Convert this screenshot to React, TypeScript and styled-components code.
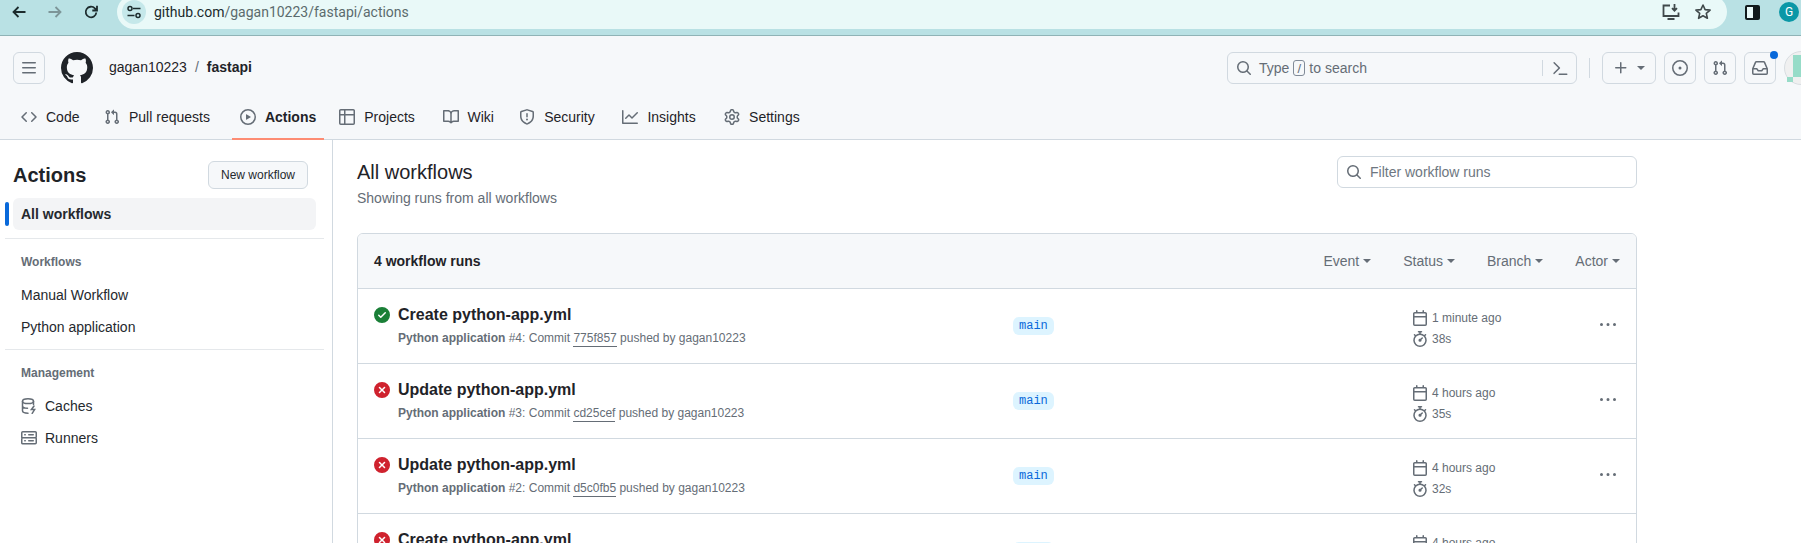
import React from "react";
import styled, { createGlobalStyle } from "styled-components";

const Global = createGlobalStyle`
  html, body { margin: 0; padding: 0; height: 100%; overflow: hidden; background: #fff; }
  body { font-family: "Liberation Sans", Arial, sans-serif; font-size: 14px; color: #1f2328; }
  * { box-sizing: border-box; }
`;

const P = {
  bars: "M1 2.75A.75.75 0 0 1 1.75 2h12.5a.75.75 0 0 1 0 1.5H1.75A.75.75 0 0 1 1 2.75Zm0 5A.75.75 0 0 1 1.75 7h12.5a.75.75 0 0 1 0 1.5H1.75A.75.75 0 0 1 1 7.75ZM1.75 12h12.5a.75.75 0 0 1 0 1.5H1.75a.75.75 0 0 1 0-1.5Z",
  github: "M8 0c4.42 0 8 3.58 8 8a8.013 8.013 0 0 1-5.45 7.59c-.4.08-.55-.17-.55-.38 0-.27.01-1.13.01-2.2 0-.75-.25-1.23-.54-1.48 1.78-.2 3.65-.88 3.65-3.95 0-.88-.31-1.59-.82-2.15.08-.2.36-1.02-.08-2.12 0 0-.67-.22-2.2.82-.64-.18-1.32-.27-2-.27-.68 0-1.36.09-2 .27-1.53-1.03-2.2-.82-2.2-.82-.44 1.1-.16 1.92-.08 2.12-.51.56-.82 1.28-.82 2.15 0 3.06 1.86 3.75 3.64 3.95-.23.2-.44.55-.51 1.07-.46.21-1.61.55-2.33-.66-.15-.24-.6-.83-1.23-.82-.67.01-.27.38.01.53.34.19.73.9.82 1.13.16.45.68 1.31 2.69.94 0 .67.01 1.3.01 1.49 0 .21-.15.45-.55.38A7.995 7.995 0 0 1 0 8c0-4.42 3.58-8 8-8Z",
  code: "m11.28 3.22 4.25 4.25a.75.75 0 0 1 0 1.06l-4.25 4.25a.749.749 0 0 1-1.275-.326.749.749 0 0 1 .215-.734L13.94 8l-3.72-3.72a.749.749 0 0 1 .326-1.275.749.749 0 0 1 .734.215Zm-6.56 0a.751.751 0 0 1 1.042.018.751.751 0 0 1 .018 1.042L2.06 8l3.72 3.72a.749.749 0 0 1-.326 1.275.749.749 0 0 1-.734-.215L.47 8.53a.75.75 0 0 1 0-1.06Z",
  pr: "M1.5 3.25a2.25 2.25 0 1 1 3 2.122v5.256a2.251 2.251 0 1 1-1.5 0V5.372A2.25 2.25 0 0 1 1.5 3.25Zm5.677-.177L9.573.677A.25.25 0 0 1 10 .854V2.5h1A2.5 2.5 0 0 1 13.5 5v5.628a2.251 2.251 0 1 1-1.5 0V5a1 1 0 0 0-1-1h-1v1.646a.25.25 0 0 1-.427.177L7.177 3.427a.25.25 0 0 1 0-.354ZM3.75 2.5a.75.75 0 1 0 0 1.5.75.75 0 0 0 0-1.5Zm0 9.5a.75.75 0 1 0 0 1.5.75.75 0 0 0 0-1.5Zm8.25.75a.75.75 0 1 0 1.5 0 .75.75 0 0 0-1.5 0Z",
  play: "M8 0a8 8 0 1 1 0 16A8 8 0 0 1 8 0ZM1.5 8a6.5 6.5 0 1 0 13 0 6.5 6.5 0 0 0-13 0Zm4.879-2.773 4.264 2.559a.25.25 0 0 1 0 .428l-4.264 2.559A.25.25 0 0 1 6 10.559V5.442a.25.25 0 0 1 .379-.215Z",
  table: "M0 1.75C0 .784.784 0 1.75 0h12.5C15.216 0 16 .784 16 1.75v12.5A1.75 1.75 0 0 1 14.25 16H1.75A1.75 1.75 0 0 1 0 14.25ZM6.5 6.5v8h7.75a.25.25 0 0 0 .25-.25V6.5Zm8-1.5V1.75a.25.25 0 0 0-.25-.25H6.5V5Zm-13 1.5v7.75c0 .138.112.25.25.25H5v-8ZM5 5V1.5H1.75a.25.25 0 0 0-.25.25V5Z",
  book: "M0 1.75A.75.75 0 0 1 .75 1h4.253c1.227 0 2.317.59 3 1.501A3.743 3.743 0 0 1 11.006 1h4.245a.75.75 0 0 1 .75.75v10.5a.75.75 0 0 1-.75.75h-4.507a2.25 2.25 0 0 0-1.591.659l-.622.621a.75.75 0 0 1-1.06 0l-.622-.621A2.25 2.25 0 0 0 5.258 13H.75a.75.75 0 0 1-.75-.75Zm7.251 10.324.004-5.073-.002-2.253A2.25 2.25 0 0 0 5.003 2.5H1.5v9h3.757a3.75 3.75 0 0 1 1.994.574ZM8.755 4.75l-.004 7.322a3.752 3.752 0 0 1 1.992-.572H14.5v-9h-3.495a2.25 2.25 0 0 0-2.25 2.25Z",
  shield: "M7.467.133a1.748 1.748 0 0 1 1.066 0l5.25 1.68A1.75 1.75 0 0 1 15 3.48V7c0 1.566-.32 3.182-1.303 4.682-.983 1.498-2.585 2.813-5.032 3.855a1.697 1.697 0 0 1-1.33 0c-2.447-1.042-4.049-2.357-5.032-3.855C1.32 10.182 1 8.566 1 7V3.48a1.75 1.75 0 0 1 1.217-1.667Zm.61 1.429a.25.25 0 0 0-.153 0l-5.25 1.68a.25.25 0 0 0-.174.238V7c0 1.358.275 2.666 1.057 3.86.784 1.194 2.121 2.34 4.366 3.297a.196.196 0 0 0 .154 0c2.245-.956 3.582-2.104 4.366-3.298C13.225 9.666 13.5 8.36 13.5 7V3.48a.251.251 0 0 0-.174-.237l-5.25-1.68ZM8.75 4.75v3a.75.75 0 0 1-1.5 0v-3a.75.75 0 0 1 1.5 0ZM9 10.5a1 1 0 1 1-2 0 1 1 0 0 1 2 0Z",
  graph: "M1.5 1.75V13.5h13.75a.75.75 0 0 1 0 1.5H.75a.75.75 0 0 1-.75-.75V1.75a.75.75 0 0 1 1.5 0Zm14.28 2.53-5.25 5.25a.75.75 0 0 1-1.06 0L7 7.06 4.28 9.78a.751.751 0 0 1-1.042-.018.751.751 0 0 1-.018-1.042l3.25-3.25a.75.75 0 0 1 1.06 0L10 7.94l4.72-4.72a.751.751 0 0 1 1.042.018.751.751 0 0 1 .018 1.042Z",
  gear: "M8 0a8.2 8.2 0 0 1 .701.031C9.444.095 9.99.645 10.16 1.29l.288 1.107c.018.066.079.158.212.224.231.114.454.243.668.386.123.082.233.09.299.071l1.103-.303c.644-.176 1.392.021 1.82.63.27.385.506.792.704 1.218.315.675.111 1.422-.364 1.891l-.814.806c-.049.048-.098.147-.088.294.016.257.016.515 0 .772-.01.147.038.246.088.294l.814.806c.475.469.679 1.216.364 1.891a7.977 7.977 0 0 1-.704 1.217c-.428.61-1.176.807-1.82.63l-1.102-.302c-.067-.019-.177-.011-.3.071a5.909 5.909 0 0 1-.668.386c-.133.066-.194.158-.211.224l-.29 1.106c-.168.646-.715 1.196-1.458 1.26a8.006 8.006 0 0 1-1.402 0c-.743-.064-1.289-.614-1.458-1.26l-.289-1.106c-.018-.066-.079-.158-.212-.224a5.738 5.738 0 0 1-.668-.386c-.123-.082-.233-.09-.299-.071l-1.103.303c-.644.176-1.392-.021-1.82-.63a8.12 8.12 0 0 1-.704-1.218c-.315-.675-.111-1.422.363-1.891l.815-.806c.05-.048.098-.147.088-.294a6.214 6.214 0 0 1 0-.772c.01-.147-.038-.246-.088-.294l-.815-.806C.635 6.045.431 5.298.746 4.623a7.92 7.92 0 0 1 .704-1.217c.428-.61 1.176-.807 1.82-.63l1.102.302c.067.019.177.011.3-.071.214-.143.437-.272.668-.386.133-.066.194-.158.211-.224l.29-1.106C6.009.645 6.556.095 7.299.03 7.53.01 7.764 0 8 0Zm-.571 1.525c-.036.003-.108.036-.137.146l-.289 1.105c-.147.561-.549.967-.998 1.189-.173.086-.34.183-.5.29-.417.278-.97.423-1.529.27l-1.103-.303c-.109-.03-.175.016-.195.045-.22.312-.412.644-.573.99-.014.031-.021.11.059.19l.815.806c.411.406.562.957.53 1.456a4.709 4.709 0 0 0 0 .582c.032.499-.119 1.05-.53 1.456l-.815.806c-.081.08-.073.159-.059.19.162.346.353.677.573.989.02.03.085.076.195.046l1.102-.303c.56-.153 1.113-.008 1.53.27.161.107.328.204.501.29.447.222.85.629.997 1.189l.289 1.105c.029.109.101.143.137.146a6.6 6.6 0 0 0 1.142 0c.036-.003.108-.036.137-.146l.289-1.105c.147-.561.549-.967.998-1.189.173-.086.34-.183.5-.29.417-.278.97-.423 1.529-.27l1.103.303c.109.029.175-.016.195-.045.22-.313.411-.644.573-.99.014-.031.021-.11-.059-.19l-.815-.806c-.411-.406-.562-.957-.53-1.456a4.709 4.709 0 0 0 0-.582c-.032-.499.119-1.05.53-1.456l.815-.806c.081-.08.073-.159.059-.19a6.464 6.464 0 0 0-.573-.989c-.02-.03-.085-.076-.195-.046l-1.102.303c-.56.153-1.113.008-1.53-.27a4.44 4.44 0 0 0-.501-.29c-.447-.222-.85-.629-.997-1.189l-.289-1.105c-.029-.11-.101-.143-.137-.146a6.6 6.6 0 0 0-1.142 0ZM11 8a3 3 0 1 1-6 0 3 3 0 0 1 6 0ZM9.5 8a1.5 1.5 0 1 0-3.001.001A1.5 1.5 0 0 0 9.5 8Z",
  search: "M10.68 11.74a6 6 0 0 1-7.922-8.982 6 6 0 0 1 8.982 7.922l3.04 3.04a.749.749 0 0 1-.326 1.275.749.749 0 0 1-.734-.215ZM11.5 7a4.499 4.499 0 1 0-8.997 0A4.499 4.499 0 0 0 11.5 7Z",
  palette: "m6.354 8.04-4.773 4.773a.75.75 0 1 0 1.061 1.06L7.945 8.57a.75.75 0 0 0 0-1.06L2.642 2.206a.75.75 0 0 0-1.06 1.061L6.353 8.04ZM7.25 13.5h7.5a.75.75 0 0 1 0 1.5h-7.5a.75.75 0 0 1 0-1.5Z",
  plus: "M7.75 2a.75.75 0 0 1 .75.75V7h4.25a.75.75 0 0 1 0 1.5H8.5v4.25a.75.75 0 0 1-1.5 0V8.5H2.75a.75.75 0 0 1 0-1.5H7V2.75A.75.75 0 0 1 7.75 2Z",
  issue: "M8 9.5a1.5 1.5 0 1 0 0-3 1.5 1.5 0 0 0 0 3Z M8 0a8 8 0 1 1 0 16A8 8 0 0 1 8 0ZM1.5 8a6.5 6.5 0 1 0 13 0 6.5 6.5 0 0 0-13 0Z",
  inbox: "M2.8 2.06A1.75 1.75 0 0 1 4.41 1h7.18c.7 0 1.333.417 1.61 1.06l2.74 6.395c.04.093.06.194.06.295v4.5A1.75 1.75 0 0 1 14.25 15H1.75A1.75 1.75 0 0 1 0 13.25v-4.5c0-.101.02-.202.06-.295Zm1.61.44a.25.25 0 0 0-.23.152L1.887 8H4.75a.75.75 0 0 1 .6.3L6.625 10h2.75l1.275-1.7a.75.75 0 0 1 .6-.3h2.863L11.82 2.652a.25.25 0 0 0-.23-.152Zm10.09 7h-2.875l-1.275 1.7a.75.75 0 0 1-.6.3h-3.5a.75.75 0 0 1-.6-.3L4.375 9.5H1.5v3.75c0 .138.112.25.25.25h12.5a.25.25 0 0 0 .25-.25Z",
  check: "M8 16A8 8 0 1 1 8 0a8 8 0 0 1 0 16Zm3.78-9.72a.751.751 0 0 0-.018-1.042.751.751 0 0 0-1.042-.018L6.75 9.19 5.28 7.72a.751.751 0 0 0-1.042.018.751.751 0 0 0-.018 1.042l2 2a.75.75 0 0 0 1.06 0Z",
  x: "M2.343 13.657A8 8 0 1 1 13.658 2.343 8 8 0 0 1 2.343 13.657ZM6.03 4.97a.751.751 0 0 0-1.042.018.751.751 0 0 0-.018 1.042L6.94 8 4.97 9.97a.749.749 0 0 0 .326 1.275.749.749 0 0 0 .734-.215L8 9.06l1.97 1.97a.749.749 0 0 0 1.275-.326.749.749 0 0 0-.215-.734L9.06 8l1.97-1.97a.749.749 0 0 0-.326-1.275.749.749 0 0 0-.734.215L8 6.94Z",
  calendar: "M4.75 0a.75.75 0 0 1 .75.75V2h5V.75a.75.75 0 0 1 1.5 0V2h1.25c.966 0 1.75.784 1.75 1.75v10.5A1.75 1.75 0 0 1 13.25 16H2.75A1.75 1.75 0 0 1 1 14.25V3.75C1 2.784 1.784 2 2.75 2H4V.75A.75.75 0 0 1 4.75 0ZM2.5 7.5v6.75c0 .138.112.25.25.25h10.5a.25.25 0 0 0 .25-.25V7.5Zm10.75-4H2.75a.25.25 0 0 0-.25.25V6h11V3.75a.25.25 0 0 0-.25-.25Z",
  stopwatch: "M5.75.75A.75.75 0 0 1 6.5 0h3a.75.75 0 0 1 0 1.5h-.75v1l-.001.041a6.724 6.724 0 0 1 3.464 1.435l.007-.006.75-.75a.749.749 0 0 1 1.275.326.749.749 0 0 1-.215.734l-.75.75-.006.007a6.75 6.75 0 1 1-10.548 0L2.72 5.03l-.75-.75a.751.751 0 0 1 .018-1.042.751.751 0 0 1 1.042-.018l.75.75.007.006A6.72 6.72 0 0 1 7.25 2.541V1.5H6.5a.75.75 0 0 1-.75-.75ZM8 14.5a5.25 5.25 0 1 0-.001-10.501A5.25 5.25 0 0 0 8 14.5Zm.389-6.7 1.33-1.33a.75.75 0 1 1 1.061 1.06L9.45 8.861A1.503 1.503 0 0 1 8 10.75a1.499 1.499 0 1 1 .389-2.95Z",
  kebab: "M8 9a1.5 1.5 0 1 0 0-3 1.5 1.5 0 0 0 0 3ZM1.5 9a1.5 1.5 0 1 0 0-3 1.5 1.5 0 0 0 0 3Zm13 0a1.5 1.5 0 1 0 0-3 1.5 1.5 0 0 0 0 3Z",
  server: "M1.75 1h12.5c.966 0 1.75.784 1.75 1.75v4c0 .372-.116.717-.314 1 .198.283.314.628.314 1v4a1.75 1.75 0 0 1-1.75 1.75H1.75A1.75 1.75 0 0 1 0 13.25v-4c0-.372.116-.717.314-1a1.739 1.739 0 0 1-.314-1v-4C0 1.784.784 1 1.75 1ZM1.5 2.75v4c0 .138.112.25.25.25h12.5a.25.25 0 0 0 .25-.25v-4a.25.25 0 0 0-.25-.25H1.75a.25.25 0 0 0-.25.25Zm.25 5.75a.25.25 0 0 0-.25.25v4c0 .138.112.25.25.25h12.5a.25.25 0 0 0 .25-.25v-4a.25.25 0 0 0-.25-.25ZM7 4.75A.75.75 0 0 1 7.75 4h4.5a.75.75 0 0 1 0 1.5h-4.5A.75.75 0 0 1 7 4.75ZM7.75 10h4.5a.75.75 0 0 1 0 1.5h-4.5a.75.75 0 0 1 0-1.5ZM3 4.75A.75.75 0 0 1 3.75 4h.5a.75.75 0 0 1 0 1.5h-.5A.75.75 0 0 1 3 4.75ZM3.75 10h.5a.75.75 0 0 1 0 1.5h-.5a.75.75 0 0 1 0-1.5Z",
};

const MUTED = "#656d76";

const Svg = styled.svg<{ $c?: string }>`
  flex: none;
  display: block;
  fill: ${(p) => p.$c || MUTED};
`;

const Oct = ({ d, size = 16, c }: { d: string; size?: number; c?: string }) => (
  <Svg viewBox="0 0 16 16" width={size} height={size} $c={c}>
    <path d={d} fillRule="evenodd" />
  </Svg>
);

const CacheIcon = () => (
  <svg width="16" height="16" viewBox="0 0 16 16" fill="none" stroke={MUTED} strokeWidth="1.5" strokeLinecap="round">
    <ellipse cx="7" cy="3.2" rx="5.5" ry="2.4" />
    <path d="M1.5 3.2v9.6c0 1.4 2.4 2.4 5.5 2.4M1.5 8c0 1.3 2.1 2.2 5 2.3M12.5 3.2v3.3" />
    <path d="M13 8l-2.6 3.6h3.2L11.2 15.4" fill="none" />
  </svg>
);

const Page = styled.div`
  height: 543px;
  overflow: hidden;
  display: flex;
  flex-direction: column;
`;

/* Browser chrome */
const Chrome = styled.div`
  flex: none;
  height: 36px;
  background: #b9e1e4;
  border-bottom: 1px solid #8fb3b6;
  display: flex;
  align-items: flex-start;
  font-family: Roboto, sans-serif;
`;
const ChromeNav = styled.div`
  display: flex;
  gap: 18px;
  width: 117px;
  padding: 2px 0 0 10px;
  flex: none;
`;
const NavGlyph = styled.span<{ $dim?: boolean }>`
  width: 18px;
  height: 20px;
  display: flex;
  align-items: center;
  justify-content: center;
  color: ${(p) => (p.$dim ? "#7d9598" : "#1c2b2d")};
`;
const Omnibox = styled.div`
  flex: none;
  width: 1610px;
  height: 34px;
  margin-top: -5px;
  border-radius: 17px;
  background: #e9f9f8;
  display: flex;
  align-items: center;
  padding: 0 15px 0 5px;
`;
const SiteChip = styled.span`
  width: 24px;
  height: 24px;
  border-radius: 50%;
  background: #c5e8ea;
  display: flex;
  align-items: center;
  justify-content: center;
  margin-right: 8px;
`;
const Url = styled.span`
  font-size: 14px;
  color: #5b6b6d;
  flex: 1;
`;
const UrlHost = styled.span`
  color: #1a2a2c;
`;
const OmniActions = styled.span`
  display: flex;
  gap: 14px;
  align-items: center;
`;
const ChromeEnd = styled.div`
  flex: 1;
  display: flex;
  align-items: center;
  gap: 19px;
  padding: 2px 0 0 18px;
`;
const ProfileDot = styled.span`
  width: 20px;
  height: 20px;
  border-radius: 50%;
  background: #0a97a6;
  color: #fff;
  font-size: 12px;
  display: flex;
  align-items: center;
  justify-content: center;
`;

/* GitHub header */
const Header = styled.header`
  flex: none;
  height: 104px;
  background: #f6f8fa;
  border-bottom: 1px solid #d1d9e0;
  display: flex;
  flex-direction: column;
`;
const TopRow = styled.div`
  height: 32px;
  margin-top: 16px;
  padding-left: 13px;
  display: flex;
  align-items: center;
  flex: none;
`;
const IconButton = styled.span<{ $w?: number }>`
  flex: none;
  width: ${(p) => p.$w || 32}px;
  height: 32px;
  border: 1px solid #d1d9e0;
  border-radius: 6px;
  color: ${MUTED};
  display: flex;
  align-items: center;
  justify-content: center;
  gap: 8px;
  position: relative;
`;
const LogoWrap = styled.span`
  margin: 0 16px;
  display: flex;
`;
const Crumbs = styled.span`
  display: flex;
  gap: 8px;
  font-size: 14px;
  padding-bottom: 2px;
`;
const Slash = styled.span`
  color: ${MUTED};
`;
const Repo = styled.span`
  font-weight: 700;
`;
const RightTools = styled.div`
  margin-left: auto;
  display: flex;
  align-items: center;
`;
const SearchBox = styled.div`
  width: 350px;
  height: 32px;
  border: 1px solid #d1d9e0;
  border-radius: 6px;
  display: flex;
  align-items: center;
  padding: 0 8px;
  color: ${MUTED};
`;
const SearchHint = styled.span`
  flex: 1;
  display: flex;
  align-items: center;
  gap: 4px;
  margin-left: 7px;
`;
const Kbd = styled.kbd`
  width: 12px;
  height: 16px;
  border: 1px solid #818b98;
  border-radius: 3px;
  font: 13px "Liberation Sans", sans-serif;
  display: flex;
  align-items: center;
  justify-content: center;
`;
const SearchSep = styled.span`
  width: 1px;
  height: 16px;
  background: #d1d9e0;
  margin-right: 9px;
`;
const ToolSep = styled.span`
  width: 1px;
  height: 20px;
  background: #d1d9e0;
  margin: 0 12px;
`;
const ToolGroup = styled.div`
  display: flex;
  gap: 8px;
  align-items: center;
`;
const Caret = styled.span`
  width: 0;
  height: 0;
  border-left: 4px solid transparent;
  border-right: 4px solid transparent;
  border-top: 4px solid currentColor;
  flex: none;
`;
const Dot = styled.span`
  position: absolute;
  top: -2px;
  right: -3px;
  width: 8px;
  height: 8px;
  border-radius: 50%;
  background: #0969da;
`;
const AvatarSvg = styled.svg`
  flex: none;
  margin-left: 8px;
  margin-right: -17px;
  display: block;
`;
const Tabs = styled.nav`
  flex: 1;
  display: flex;
  gap: 7px;
  padding-left: 13px;
  margin-bottom: -1px;
  margin-top: 12px;
`;
const Tab = styled.span<{ $active?: boolean }>`
  display: flex;
  align-items: center;
  gap: 9px;
  padding: 0 8px;
  font-weight: ${(p) => (p.$active ? 700 : 400)};
  border-bottom: 2px solid ${(p) => (p.$active ? "#fd8c73" : "transparent")};
`;
/* GitHub reserves the bold width of each label so a tab doesn't shift when selected. */
const TabLabel = styled.span<{ $text: string }>`
  &::before {
    content: "${(p) => p.$text}";
    display: block;
    height: 0;
    font-weight: 700;
    visibility: hidden;
  }
`;

/* Body */
const Body = styled.div`
  flex: 1;
  display: flex;
  min-height: 0;
`;
const Sidebar = styled.aside`
  flex: none;
  width: 333px;
  border-right: 1px solid #d1d9e0;
  padding: 21px 8px 0 5px;
`;
const SideTop = styled.div`
  display: flex;
  justify-content: space-between;
  align-items: center;
  height: 28px;
  padding: 0 16px 0 8px;
`;
const SideTitle = styled.h2`
  margin: 0;
  font-size: 20px;
  line-height: 28px;
  font-weight: 700;
`;
const SmallBtn = styled.button`
  height: 28px;
  width: 100px;
  border: 1px solid #d1d9e0;
  border-radius: 6px;
  background: #f6f8fa;
  color: #25292e;
  font: 12px "Liberation Sans", sans-serif;
`;
const ActiveWrap = styled.div`
  margin: 9px 0 0;
  position: relative;
`;
const ActiveBar = styled.span`
  position: absolute;
  left: 0;
  top: 4px;
  width: 4px;
  height: 24px;
  border-radius: 6px;
  background: #0969da;
`;
const SideItem = styled.div<{ $active?: boolean }>`
  height: 32px;
  margin: 0 8px;
  padding-left: 8px;
  border-radius: 6px;
  display: flex;
  align-items: center;
  gap: 8px;
  color: #25292e;
  font-weight: ${(p) => (p.$active ? 700 : 400)};
  background: ${(p) => (p.$active ? "#f3f4f6" : "transparent")};
`;
const SideDivider = styled.hr<{ $top: number }>`
  border: 0;
  height: 1px;
  background: #e5e8eb;
  margin: ${(p) => p.$top}px 0 0;
`;
const SideLabel = styled.div`
  margin: 14px 0 8px 16px;
  font-size: 12px;
  line-height: 18px;
  font-weight: 700;
  color: ${MUTED};
`;

const Main = styled.main`
  flex: none;
  width: 1304px;
  padding: 16px 0 0 24px;
`;
const MainHead = styled.div`
  display: flex;
  justify-content: space-between;
  align-items: flex-start;
`;
const MainTitleBlock = styled.div`
  padding-top: 1px;
`;
const MainTitle = styled.h1`
  margin: 0;
  font-size: 20px;
  line-height: 31px;
  font-weight: 400;
`;
const MainSub = styled.div`
  line-height: 20px;
  color: ${MUTED};
`;
const Filter = styled.div`
  width: 300px;
  height: 32px;
  border: 1px solid #d1d9e0;
  border-radius: 6px;
  display: flex;
  align-items: center;
  gap: 8px;
  padding: 0 8px;
  color: #6e7781;
`;
const Card = styled.section`
  margin-top: 25px;
  width: 1280px;
  border: 1px solid #d1d9e0;
  border-radius: 6px;
  overflow: hidden;
`;
const CardHead = styled.div`
  height: 55px;
  background: #f6f8fa;
  border-bottom: 1px solid #d1d9e0;
  display: flex;
  align-items: center;
  justify-content: space-between;
  padding: 0 16px;
`;
const RunCount = styled.div`
  font-weight: 700;
`;
const Filters = styled.div`
  display: flex;
  gap: 32px;
  color: ${MUTED};
`;
const FilterBtn = styled.span`
  display: flex;
  align-items: center;
  gap: 4px;
`;
const Row = styled.div`
  height: 75px;
  border-bottom: 1px solid #d1d9e0;
  display: grid;
  grid-template-columns: 639px 399px 188px 16px;
  padding-left: 16px;
`;
const RunCol = styled.div`
  display: flex;
  gap: 8px;
  padding-top: 14px;
`;
const StatusWrap = styled.span`
  padding-top: 4px;
`;
const RunText = styled.div`
  display: flex;
  flex-direction: column;
`;
const RunTitle = styled.div`
  font-size: 16px;
  line-height: 24px;
  font-weight: 700;
`;
const RunMeta = styled.div`
  margin-top: 2px;
  font-size: 12px;
  line-height: 18px;
  color: ${MUTED};
`;
const Workflow = styled.b`
  font-weight: 700;
`;
const Hash = styled.span`
  border-bottom: 1px solid ${MUTED};
  padding-bottom: 1px;
`;
const BranchCol = styled.div`
  display: flex;
  align-items: center;
`;
const Branch = styled.span`
  font: 12px/18px "Liberation Mono", monospace;
  color: #0969da;
  background: #ddf4ff;
  border-radius: 6px;
  padding: 0 6px;
`;
const TimeCol = styled.div`
  padding-top: 18px;
  display: flex;
  flex-direction: column;
`;
const TimeLine = styled.div`
  height: 21px;
  display: flex;
  align-items: center;
  gap: 4px;
  font-size: 12px;
  color: ${MUTED};
`;
const KebabCol = styled.div`
  display: flex;
  align-items: center;
  padding-bottom: 3px;
`;

const tabs = [
  { d: P.code, label: "Code" },
  { d: P.pr, label: "Pull requests" },
  { d: P.play, label: "Actions", active: true },
  { d: P.table, label: "Projects" },
  { d: P.book, label: "Wiki" },
  { d: P.shield, label: "Security" },
  { d: P.graph, label: "Insights" },
  { d: P.gear, label: "Settings" },
];

const runs = [
  { ok: true, title: "Create python-app.yml", n: 4, hash: "775f857", when: "1 minute ago", dur: "38s" },
  { ok: false, title: "Update python-app.yml", n: 3, hash: "cd25cef", when: "4 hours ago", dur: "35s" },
  { ok: false, title: "Update python-app.yml", n: 2, hash: "d5c0fb5", when: "4 hours ago", dur: "32s" },
  { ok: false, title: "Create python-app.yml", n: 1, hash: "", when: "4 hours ago", dur: "" },
];

export default function App() {
  return (
    <Page>
      <Global />
      <Chrome>
        <ChromeNav>
          <NavGlyph>
            <svg width="16" height="16" viewBox="0 0 16 16" fill="none" stroke="currentColor" strokeWidth="1.8"><path d="M14.5 8H2.5M7.5 3l-5 5 5 5" /></svg>
          </NavGlyph>
          <NavGlyph $dim>
            <svg width="16" height="16" viewBox="0 0 16 16" fill="none" stroke="currentColor" strokeWidth="1.8"><path d="M1.5 8h12M8.5 3l5 5-5 5" /></svg>
          </NavGlyph>
          <NavGlyph>
            <svg width="16" height="16" viewBox="0 0 16 16" fill="none" stroke="currentColor" strokeWidth="1.8"><path d="M13.3 8.5a5.3 5.3 0 1 1-1.4-4.1L14 6.5M14 1.8v4.7H9.3" /></svg>
          </NavGlyph>
        </ChromeNav>
        <Omnibox>
          <SiteChip>
            <svg width="16" height="16" viewBox="0 0 16 16" fill="none" stroke="#1c2b2d" strokeWidth="1.5"><path d="M7 4.5h7.5M1.5 11.5h7" /><circle cx="4" cy="4.5" r="2" /><circle cx="12" cy="11.5" r="2" /></svg>
          </SiteChip>
          <Url><UrlHost>github.com</UrlHost>/gagan10223/fastapi/actions</Url>
          <OmniActions>
            <svg width="18" height="18" viewBox="0 0 18 18" fill="none" stroke="#40494b" strokeWidth="1.8"><path d="M8 2.5H1.5v10.5h15V9.5M12.5 1v6.5M10 5.2l2.5 2.5L15 5.2M5.5 16h7" /></svg>
            <svg width="18" height="18" viewBox="0 0 18 18" fill="none" stroke="#40494b" strokeWidth="1.6" strokeLinejoin="round"><path d="M9 2l2.1 4.6 5 .5-3.8 3.3 1.1 4.9L9 12.8l-4.4 2.5 1.1-4.9L1.9 7.1l5-.5z" /></svg>
          </OmniActions>
        </Omnibox>
        <ChromeEnd>
          <svg width="15" height="15" viewBox="0 0 15 15"><rect x="0" y="0" width="15" height="15" rx="2" fill="#111a1c" /><rect x="2" y="2" width="6" height="11" fill="#e9f9f8" /></svg>
          <ProfileDot>G</ProfileDot>
        </ChromeEnd>
      </Chrome>

      <Header>
        <TopRow>
          <IconButton><Oct d={P.bars} /></IconButton>
          <LogoWrap><Oct d={P.github} size={32} c="#1f2328" /></LogoWrap>
          <Crumbs>
            <span>gagan10223</span>
            <Slash>/</Slash>
            <Repo>fastapi</Repo>
          </Crumbs>
          <RightTools>
            <SearchBox>
              <Oct d={P.search} />
              <SearchHint>Type <Kbd>/</Kbd> to search</SearchHint>
              <SearchSep />
              <Oct d={P.palette} />
            </SearchBox>
            <ToolSep />
            <ToolGroup>
              <IconButton $w={54}><Oct d={P.plus} /><Caret /></IconButton>
              <IconButton><Oct d={P.issue} /></IconButton>
              <IconButton><Oct d={P.pr} /></IconButton>
              <IconButton><Oct d={P.inbox} /><Dot /></IconButton>
            </ToolGroup>
            <AvatarSvg width="34" height="34" viewBox="0 0 34 34">
              <circle cx="17" cy="17" r="16.5" fill="#f0f0f0" stroke="#d8dde1" />
              <path d="M9 4h16v22H9zM3 26h6v5H3z" fill="#97dcc8" />
            </AvatarSvg>
          </RightTools>
        </TopRow>
        <Tabs>
          {tabs.map((t) => (
            <Tab key={t.label} $active={t.active}>
              <Oct d={t.d} />
              <TabLabel $text={t.label}>{t.label}</TabLabel>
            </Tab>
          ))}
        </Tabs>
      </Header>

      <Body>
        <Sidebar>
          <SideTop>
            <SideTitle>Actions</SideTitle>
            <SmallBtn>New workflow</SmallBtn>
          </SideTop>
          <ActiveWrap>
            <ActiveBar />
            <SideItem $active>All workflows</SideItem>
          </ActiveWrap>
          <SideDivider $top={8} />
          <SideLabel>Workflows</SideLabel>
          <SideItem>Manual Workflow</SideItem>
          <SideItem>Python application</SideItem>
          <SideDivider $top={6} />
          <SideLabel>Management</SideLabel>
          <SideItem><CacheIcon />Caches</SideItem>
          <SideItem><Oct d={P.server} />Runners</SideItem>
        </Sidebar>
        <Main>
          <MainHead>
            <MainTitleBlock>
              <MainTitle>All workflows</MainTitle>
              <MainSub>Showing runs from all workflows</MainSub>
            </MainTitleBlock>
            <Filter><Oct d={P.search} />Filter workflow runs</Filter>
          </MainHead>
          <Card>
            <CardHead>
              <RunCount>4 workflow runs</RunCount>
              <Filters>
                {["Event", "Status", "Branch", "Actor"].map((f) => (
                  <FilterBtn key={f}>{f}<Caret /></FilterBtn>
                ))}
              </Filters>
            </CardHead>
            {runs.map((r) => (
              <Row key={r.n}>
                <RunCol>
                  <StatusWrap>
                    <Oct d={r.ok ? P.check : P.x} c={r.ok ? "#1a7f37" : "#cf222e"} />
                  </StatusWrap>
                  <RunText>
                    <RunTitle>{r.title}</RunTitle>
                    {r.hash && (
                      <RunMeta>
                        <Workflow>Python application</Workflow> #{r.n}: Commit <Hash>{r.hash}</Hash> pushed by gagan10223
                      </RunMeta>
                    )}
                  </RunText>
                </RunCol>
                <BranchCol><Branch>main</Branch></BranchCol>
                <TimeCol>
                  <TimeLine><Oct d={P.calendar} />{r.when}</TimeLine>
                  {r.dur && <TimeLine><Oct d={P.stopwatch} />{r.dur}</TimeLine>}
                </TimeCol>
                <KebabCol><Oct d={P.kebab} /></KebabCol>
              </Row>
            ))}
          </Card>
        </Main>
      </Body>
    </Page>
  );
}
